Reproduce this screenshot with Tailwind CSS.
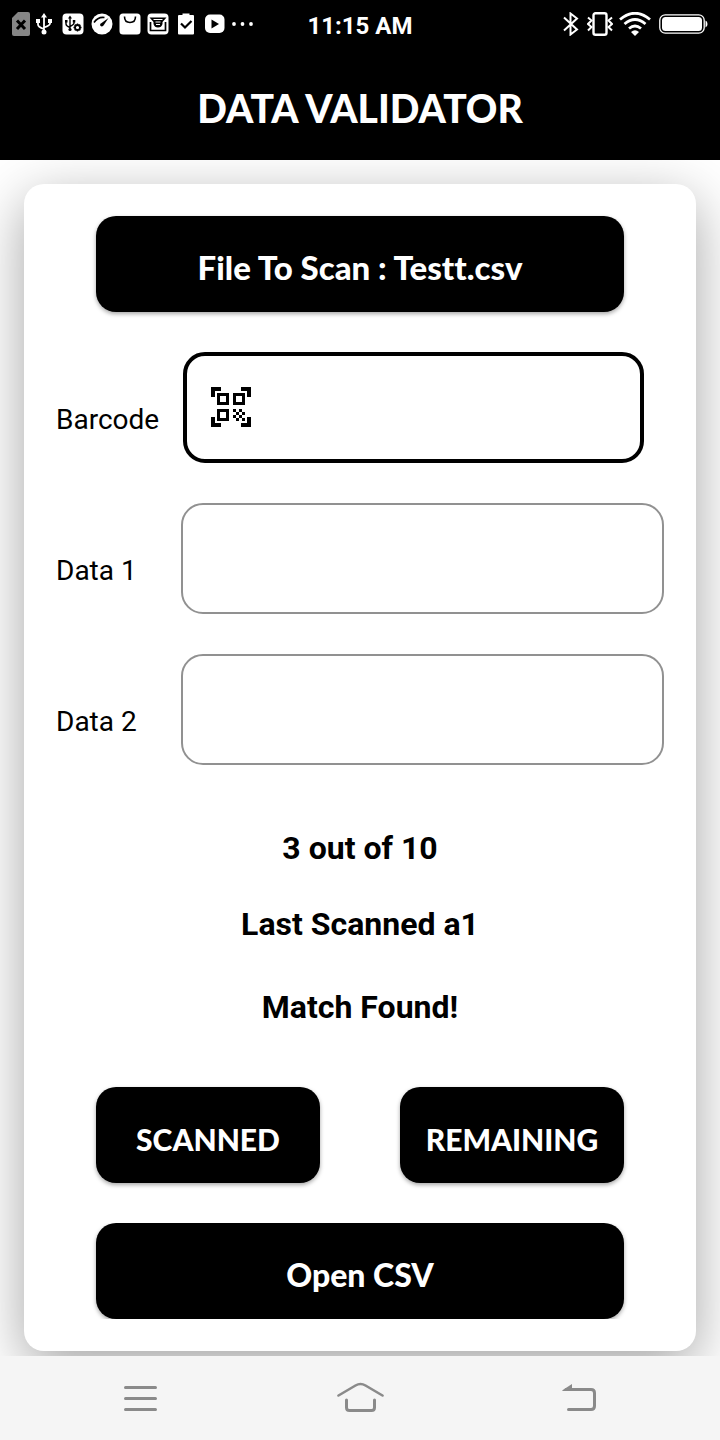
<!DOCTYPE html>
<html lang="en">
<head>
<meta charset="utf-8">
<meta name="viewport" content="width=device-width, initial-scale=1">
<title>Data Validator</title>
<script src="https://cdn.jsdelivr.net/npm/@tailwindcss/browser@4"></script>
</head>
<body class="flex min-h-screen flex-col bg-white font-['Roboto',sans-serif] text-black">

<div class="grid h-12 grid-cols-[1fr_auto_1fr] items-center bg-black pr-3 pl-3 text-white">
  <div class="flex items-center">
    <svg class="h-6 w-[18px]" viewBox="0 0 18 24"><path d="M6 0H16a2 2 0 0 1 2 2V22a2 2 0 0 1-2 2H2a2 2 0 0 1-2-2V6z" fill="#868686"/><path d="M5 8.500l8 8.500M13 8.500l-8 8.500" stroke="#000" stroke-width="3"/></svg>
    <svg class="ml-1.5 h-6 w-4" viewBox="0 0 16 24" fill="none" stroke="#fff" stroke-width="1.800"><path d="M8 3V20M2 8v4.500q0 2.500 6 4.500M14 8v3.500q0 2-6 4"/><path d="M8 1l3 4.500H5z" fill="#fff" stroke="none"/><circle cx="8" cy="20" r="2.500" fill="#fff" stroke="none"/><path d="M0 7h4v4H0zM12 7h4v4h-4z" fill="#fff" stroke="none"/></svg>
    <svg class="ml-2.5 h-[22px] w-[22px]" viewBox="0 0 22 22"><rect x=".5" y=".5" width="21" height="21" rx="4" fill="#fff"/><g fill="none" stroke="#000" stroke-width="1.400"><path d="M8 4V17M4 8v3q0 2 4 3.500M12 8v2q0 1.500-4 3.500"/><circle cx="15.500" cy="14.500" r="2.500" stroke-width="1.800"/><path d="M15.500 10.500v2M15.500 16.500v2M11.500 14.500h2M17.500 14.500h2M12.700 11.700l1.400 1.400M18.300 11.700l-1.400 1.400M12.700 17.300l1.400-1.400M18.300 17.300l-1.400-1.400"/></g><path d="M8 2.500l2 3H6zM3 7h2.500v2.500H3zM10.800 7h2.500v2.500h-2.500z"/><circle cx="8" cy="16.500" r="1.600"/></svg>
    <svg class="ml-[7px] h-[22px] w-[22px]" viewBox="0 0 22 22"><circle cx="11" cy="11" r="10.500" fill="#fff"/><path d="M3 9.500Q7 3.500 13.500 4.500" fill="none" stroke="#000" stroke-width="1.600"/><path d="M17.500 5l-5 7.500q-1.500 1.500-2.800.6T9.500 10.800z"/></svg>
    <svg class="ml-1.5 h-[22px] w-[22px]" viewBox="0 0 22 22"><rect x=".5" y=".5" width="21" height="21" rx="3.500" fill="#fff"/><path d="M5.500 3.500q0 6 5.500 6t5.500-6" fill="none" stroke="#000" stroke-width="1.600"/></svg>
    <svg class="ml-1.5 h-[22px] w-[22px]" viewBox="0 0 22 22"><rect x=".5" y=".5" width="21" height="21" rx="4" fill="#fff"/><path d="M3.500 9v8.500h15V9" fill="none" stroke="#000" stroke-width="1.700"/><path d="M2.500 4.500h17L15.500 9v2q-1 3.500-4.500 3.500T6.500 11V9z"/><path d="M6.500 6.500h9M8.500 9h5M9 11.500h4" stroke="#fff" stroke-width="1"/></svg>
    <svg class="ml-[9px] h-[22px] w-4" viewBox="0 0 16 22"><path d="M1 2h3.500V.5h7V2H15q1 0 1 1v17.500q0 1-1 1H1q-1 0-1-1V3q0-1 1-1z" fill="#fff"/><path d="M3 10.500l4 4 6.500-6.500" fill="none" stroke="#000" stroke-width="2.200"/></svg>
    <svg class="ml-2.5 h-[22px] w-[22px]" viewBox="0 0 22 22"><rect x="1" y="1.500" width="19.500" height="18.500" rx="5" fill="#fff"/><path d="M7.500 6.500v9l7.500-4.500z"/></svg>
    <svg class="ml-1.5 h-[22px] w-[22px]" viewBox="0 0 22 22" fill="#fff"><circle cx="2" cy="11" r="1.900"/><circle cx="10.500" cy="11" r="1.900"/><circle cx="19" cy="11" r="1.900"/></svg>
  </div>
  <div class="pt-[3px] text-2xl font-bold">11:15 AM</div>
  <div class="flex items-center justify-end">
    <svg class="h-6 w-4" viewBox="0 0 16 24" fill="none" stroke="#fff" stroke-width="2"><path d="M1 5.500l13 12-6.500 5V1.500L14 6.500l-13 12"/></svg>
    <svg class="ml-2 h-6 w-[26px]" viewBox="0 0 26 24" fill="none" stroke="#fff"><rect x="6.500" y="1.200" width="13" height="21.600" rx="2" stroke-width="2.400"/><path d="M1 5.500l3.500 3L1 12l3.500 3L1 18.500M25 5.500l-3.500 3L25 12l-3.500 3 3.500 3.500" stroke-width="2"/></svg>
    <svg class="ml-1.5 h-6 w-8" viewBox="0 0 32 24" fill="none" stroke="#fff" stroke-width="2.800"><path d="M1 7.500Q16-5 31 7.500M5.500 12Q16 3 26.500 12M10 16.500q6-5 12 0"/><path d="M12 20q4-3.500 8 0l-4 4z" fill="#fff" stroke="none"/></svg>
    <svg class="ml-2 h-5 w-[49px]" viewBox="0 0 49 20"><rect x=".8" y=".8" width="44.400" height="18.400" rx="5.500" fill="none" stroke="#fff" stroke-width="1.300"/><rect x="3" y="3" width="40" height="14" rx="3.500" fill="#fff"/><path d="M46.500 6.500q2 .5 2 3.500t-2 3.500z" fill="#fff"/></svg>
  </div>
</div>

<header class="flex h-28 items-center justify-center bg-black pt-2 text-white">
  <h1 class="font-['Lato',sans-serif] text-[39px] leading-[48px] font-black">DATA VALIDATOR</h1>
</header>

<main class="flex-1 overflow-hidden px-6 pt-6 pb-[5px]">
  <div class="rounded-[20px] bg-white p-8 shadow-[0_16px_56px_rgba(0,0,0,0.36)]">
    <div class="px-10">
      <button type="button" class="flex h-24 w-full items-center justify-center rounded-[20px] bg-black pt-2 font-['Lato',sans-serif] text-[33px] font-black text-white [font-variant-ligatures:none] shadow-[0_2px_4px_rgba(0,0,0,0.35)]">File To Scan : Testt.csv</button>
    </div>

    <form class="mt-10 flex flex-col gap-10 text-[28px] leading-8">
      <div class="flex items-center pr-5">
        <label for="barcode" class="w-[127px] shrink-0 pt-6">Barcode</label>
        <div class="relative flex-1">
          <input id="barcode" type="text" class="block h-[111px] w-full rounded-[22px] border-4 border-black bg-white pr-6 pl-20 outline-none">
          <svg class="pointer-events-none absolute top-[35px] left-7 h-10 w-10" viewBox="0 0 40 40" shape-rendering="crispEdges"><path d="M0 0h10v4H4v6H0zM30 0h10v10h-4V4h-6zM0 30h4v6h6v4H0zM36 30h4v10H30v-4h6z"/><g fill="none" stroke="#000" stroke-width="3"><path d="M7.500 7.500h9v9h-9zM23.500 7.500h9v9h-9zM7.500 23.500h9v9h-9z"/></g><path d="M22 22h3v3h-3zM28 22h3v3h-3zM25 25h3v3h-3zM31 25h3v3h-3zM22 28h3v3h-3zM28 28h3v3h-3zM25 31h3v3h-3zM31 31h3v3h-3z"/></svg>
        </div>
      </div>
      <div class="flex items-center">
        <label for="data1" class="w-[125px] shrink-0 pt-6">Data 1</label>
        <input id="data1" type="text" class="h-[111px] min-w-0 flex-1 rounded-[22px] border-2 border-[#919191] bg-white px-6 outline-none">
      </div>
      <div class="flex items-center">
        <label for="data2" class="w-[125px] shrink-0 pt-6">Data 2</label>
        <input id="data2" type="text" class="h-[111px] min-w-0 flex-1 rounded-[22px] border-2 border-[#919191] bg-white px-6 outline-none">
      </div>
    </form>

    <div class="mt-16 text-center text-[32px] leading-[38px] font-bold">
      <p>3 out of 10</p>
      <p class="mt-[38px]">Last Scanned a1</p>
      <p class="mt-[45px]">Match Found!</p>
    </div>

    <div class="mt-[61px] flex gap-20 px-10">
      <button type="button" class="flex h-24 flex-1 items-center justify-center rounded-[20px] bg-black pt-2 font-['Lato',sans-serif] text-[30px] font-black text-white shadow-[0_2px_4px_rgba(0,0,0,0.35)]">SCANNED</button>
      <button type="button" class="flex h-24 flex-1 items-center justify-center rounded-[20px] bg-black pt-2 font-['Lato',sans-serif] text-[30px] font-black text-white shadow-[0_2px_4px_rgba(0,0,0,0.35)]">REMAINING</button>
    </div>
    <div class="mt-10 overflow-hidden px-10">
      <button type="button" class="flex h-24 w-full items-center justify-center rounded-[20px] bg-black pt-2 font-['Lato',sans-serif] text-[32px] font-black text-white shadow-[0_2px_4px_rgba(0,0,0,0.35)]">Open CSV</button>
    </div>
  </div>
</main>

<nav class="flex h-[84px] items-center justify-between bg-[#f5f5f5] px-[124px]">
  <button type="button" aria-label="Menu"><svg class="h-8 w-[34px]" viewBox="0 0 34 32" fill="none" stroke="#8a8a8a" stroke-width="3" stroke-linecap="round"><path d="M1.500 5.500h30M1.500 16.500h30M1.500 27.500h30"/></svg></button>
  <button type="button" aria-label="Home"><svg class="h-8 w-12" viewBox="0 0 48 32" fill="none" stroke="#8a8a8a" stroke-linecap="round"><path d="M2.500 13.500L19.500 3.500q5-3 10 0l17 10" stroke-width="2.600"/><path d="M10.500 18v7.500q0 3 3 3H35.500q3 0 3-3V18" stroke-width="3"/></svg></button>
  <button type="button" aria-label="Back"><svg class="h-8 w-[34px]" viewBox="0 0 34 32" fill="none" stroke="#8a8a8a" stroke-width="3" stroke-linecap="round"><path d="M4 7.500H29q3.500 0 3.500 3.500V24q0 3.500-3.500 3.500H6.500"/><path d="M0 8.500L10 2v7H1z" fill="#8a8a8a" stroke="none"/></svg></button>
</nav>
</body>
</html>
